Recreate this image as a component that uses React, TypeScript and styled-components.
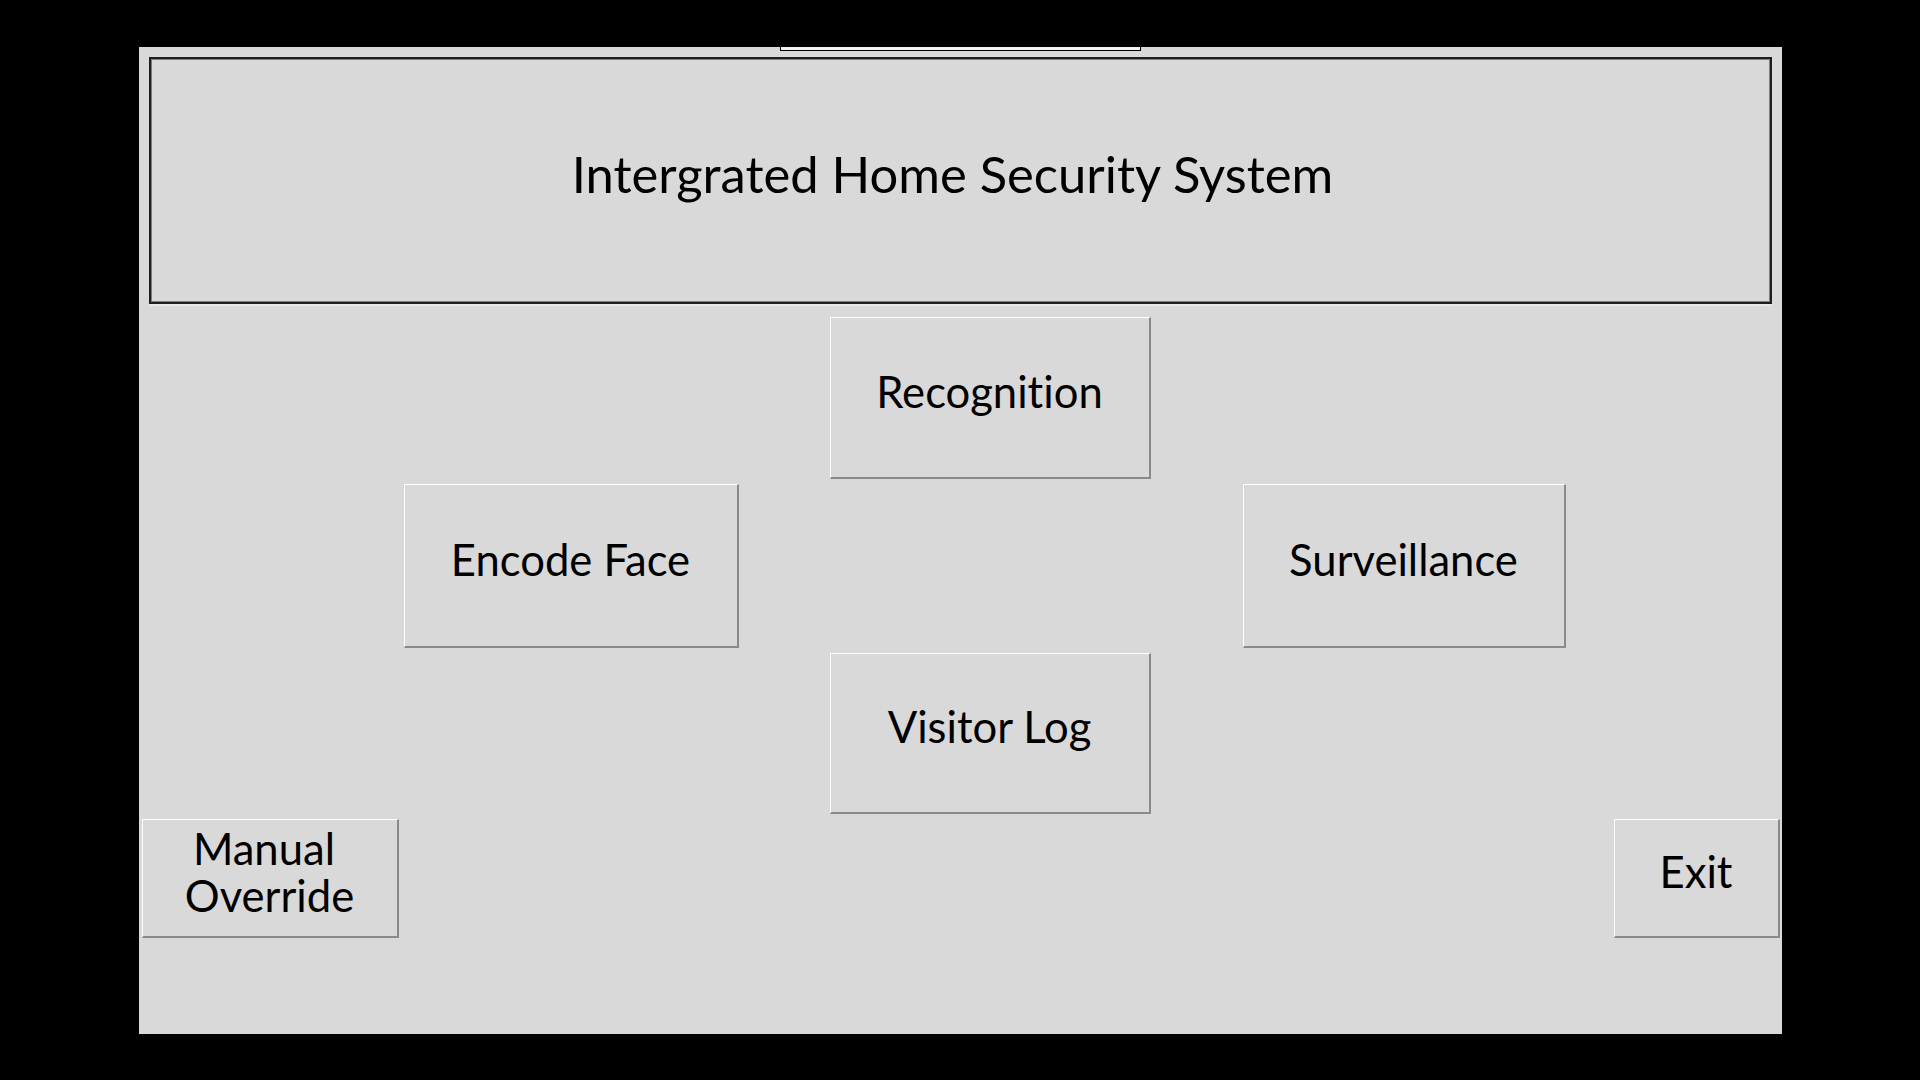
import React from 'react'
import styled, { createGlobalStyle } from 'styled-components'

const GlobalStyle = createGlobalStyle`
  html, body {
    margin: 0;
    padding: 0;
    background: #000;
  }
  * {
    box-sizing: border-box;
  }
`

const Screen = styled.main`
  width: 1920px;
  height: 1080px;
  display: flex;
  align-items: center;
  justify-content: center;
  font-family: Lato, 'Liberation Sans', sans-serif;
  font-variant-ligatures: none;
  color: #000;
`

const Window = styled.div`
  width: 1643px;
  height: 987px;
  background: #d9d9d9;
  display: flex;
  flex-direction: column;
`

const TopTab = styled.div`
  align-self: center;
  width: 361px;
  height: 4px;
  background: #f4f4f4;
  border: 1px solid #000;
  border-top: none;
`

const Header = styled.header`
  margin: 6px 10px 0;
  height: 247px;
  border: 2px solid #1e1e1e;
  box-shadow: inset 1px 1px 0 #7c7c7c, inset -1px -1px 0 #7c7c7c,
    0 2px 0 #e6e6e6;
  display: flex;
  align-items: center;
  justify-content: center;
  padding: 0 15px 14px 0;
`

const Title = styled.h1`
  margin: 0;
  font-size: 50.7px;
  font-weight: 400;
`

const Board = styled.div`
  margin-top: 13px;
  padding-left: 3px;
  display: grid;
  grid-template-columns: 257px 5px 335px 91px 321px 92px 323px 48px 166px;
  grid-template-rows: 162px 164px 161px 119px;
  row-gap: 5px;
`

const Button = styled.button<{ $col: number; $row: number }>`
  grid-column: ${p => p.$col};
  grid-row: ${p => p.$row};
  margin: 0;
  padding: 0 0 12px;
  background: #d9d9d9;
  border-style: solid;
  border-width: 1px 2px 2px 1px;
  border-color: #ffffff #8a8a8a #8a8a8a #ffffff;
  font-family: inherit;
  font-variant-ligatures: none;
  font-size: 43.6px;
  line-height: 47px;
  color: #000;
  display: flex;
  align-items: center;
  justify-content: center;
  text-align: center;
  white-space: pre;
  cursor: pointer;
`

const App = () => (
  <>
    <GlobalStyle />
    <Screen>
      <Window>
        <TopTab />
        <Header>
          <Title>Intergrated Home Security System</Title>
        </Header>
        <Board>
          <Button $col={5} $row={1}>Recognition</Button>
          <Button $col={3} $row={2}>Encode Face</Button>
          <Button $col={7} $row={2}>Surveillance</Button>
          <Button $col={5} $row={3}>Visitor Log</Button>
          <Button $col={1} $row={4}>{'Manual \nOverride'}</Button>
          <Button $col={9} $row={4}>Exit</Button>
        </Board>
      </Window>
    </Screen>
  </>
)

export default App
